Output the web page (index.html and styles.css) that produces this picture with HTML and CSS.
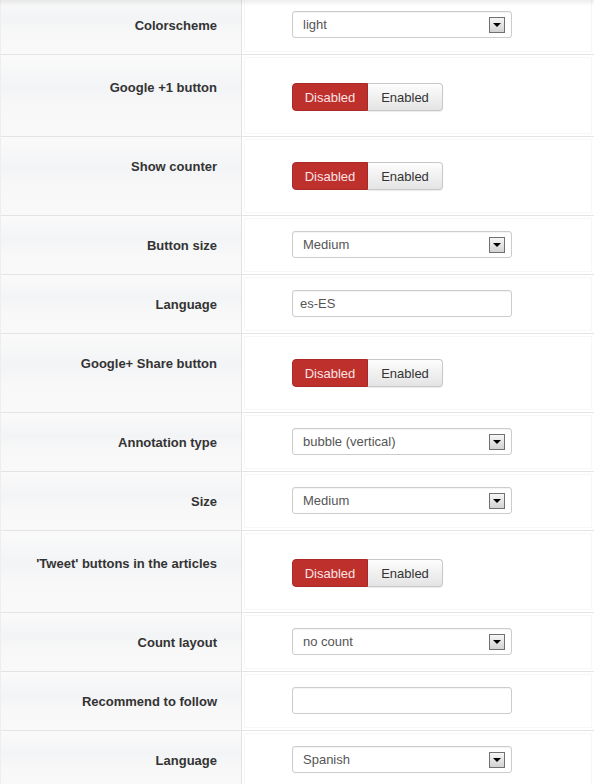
FILE: index.html
```html
<!DOCTYPE html>
<html lang="en">
<head>
    <meta charset="UTF-8">
    <title>Social buttons options</title>
    <link rel="stylesheet" href="styles.css">
</head>
<body>
    <div class="options">
        <div class="row">
            <div class="label">Colorscheme</div>
            <div class="controls"><div class="select">light<span class="arrow"></span></div></div>
        </div>
        <div class="row tall">
            <div class="label">Google +1 button</div>
            <div class="controls toggle-cell">
                <div class="toggle"><span class="off active">Disabled</span><span class="on">Enabled</span></div>
            </div>
        </div>
        <div class="row">
            <div class="label">Show counter</div>
            <div class="controls toggle-cell">
                <div class="toggle"><span class="off active">Disabled</span><span class="on">Enabled</span></div>
            </div>
        </div>
        <div class="row">
            <div class="label">Button size</div>
            <div class="controls"><div class="select">Medium<span class="arrow"></span></div></div>
        </div>
        <div class="row">
            <div class="label">Language</div>
            <div class="controls"><input class="text" type="text" value="es-ES"></div>
        </div>
        <div class="row">
            <div class="label">Google+ Share button</div>
            <div class="controls toggle-cell">
                <div class="toggle"><span class="off active">Disabled</span><span class="on">Enabled</span></div>
            </div>
        </div>
        <div class="row">
            <div class="label">Annotation type</div>
            <div class="controls"><div class="select">bubble (vertical)<span class="arrow"></span></div></div>
        </div>
        <div class="row">
            <div class="label">Size</div>
            <div class="controls"><div class="select">Medium<span class="arrow"></span></div></div>
        </div>
        <div class="row tall">
            <div class="label">'Tweet' buttons in the articles</div>
            <div class="controls toggle-cell">
                <div class="toggle"><span class="off active">Disabled</span><span class="on">Enabled</span></div>
            </div>
        </div>
        <div class="row">
            <div class="label">Count layout</div>
            <div class="controls"><div class="select">no count<span class="arrow"></span></div></div>
        </div>
        <div class="row">
            <div class="label">Recommend to follow</div>
            <div class="controls"><input class="text" type="text" value=""></div>
        </div>
        <div class="row">
            <div class="label">Language</div>
            <div class="controls"><div class="select">Spanish<span class="arrow"></span></div></div>
        </div>
    </div>
</body>
</html>
```

FILE: styles.css
```css
body {
    margin: 0;
    background: #fff;
    font-family: "Liberation Sans", Arial, sans-serif;
    font-size: 13px;
    color: #333;
    overflow: hidden;
}
body::before {
    content: "";
    position: fixed;
    top: 0;
    left: 0;
    right: 0;
    height: 6px;
    background: linear-gradient(rgba(0, 0, 0, 0.07), rgba(0, 0, 0, 0));
    z-index: 2;
}
.options {
    margin-top: -5px;
    border-left: 1px solid #eee;
}
.row {
    display: flex;
    border-top: 1px solid #e4e4e4;
}
.label {
    width: 216px;
    flex-shrink: 0;
    padding: 21px 24px 0 0;
    text-align: right;
    font-weight: bold;
    line-height: 18px;
    color: #333;
    border-right: 1px solid #e2e2e2;
    background: linear-gradient(#fafafa, #f3f4f6 40%, #f8f8f8 65%, #f9f9f9);
}
.tall .label {
    padding-top: 24px;
}
.controls {
    flex: 1;
    padding: 15px 0 16px 50px;
    box-shadow: inset 0 0 0 2px #fff, inset 0 0 0 3px #f7f7f7;
}
.toggle-cell {
    padding-top: 25px;
    padding-bottom: 25px;
}
.tall .toggle-cell {
    padding-top: 28px;
}
.select, .text {
    box-sizing: border-box;
    width: 220px;
    height: 27px;
    border: 1px solid #ccc;
    border-radius: 3px;
    box-shadow: inset 0 1px 1px rgba(0, 0, 0, 0.05);
    background: #fff;
    color: #555;
    font-family: "Liberation Sans", Arial, sans-serif;
    font-size: 13px;
}
.select {
    display: flex;
    align-items: center;
    justify-content: space-between;
    padding: 0 6px 0 10px;
}
.text {
    display: block;
    padding: 0 7px;
    outline: none;
}
.arrow {
    position: relative;
    width: 14px;
    height: 14px;
    border: 1px solid #707070;
    background: linear-gradient(#f6f6f6, #d2d2d2);
}
.arrow::after {
    content: "";
    position: absolute;
    left: 3px;
    top: 5px;
    border-left: 4px solid transparent;
    border-right: 4px solid transparent;
    border-top: 4px solid #000;
}
.toggle {
    display: flex;
    height: 28px;
}
.toggle span {
    display: flex;
    align-items: center;
    justify-content: center;
    box-sizing: border-box;
    height: 28px;
    font-size: 13px;
}
.toggle .off {
    width: 76px;
    border-radius: 4px 0 0 4px;
}
.toggle .on {
    width: 75px;
    border: 1px solid #c8c8c8;
    border-left: none;
    border-radius: 0 4px 4px 0;
    background: linear-gradient(#fdfdfd, #e4e4e4);
    color: #333;
    box-shadow: 0 1px 1px rgba(0, 0, 0, 0.08);
}
.toggle .active {
    background: #bd302c;
    border: 1px solid #a92a27;
    color: #fbe3e2;
}
```
